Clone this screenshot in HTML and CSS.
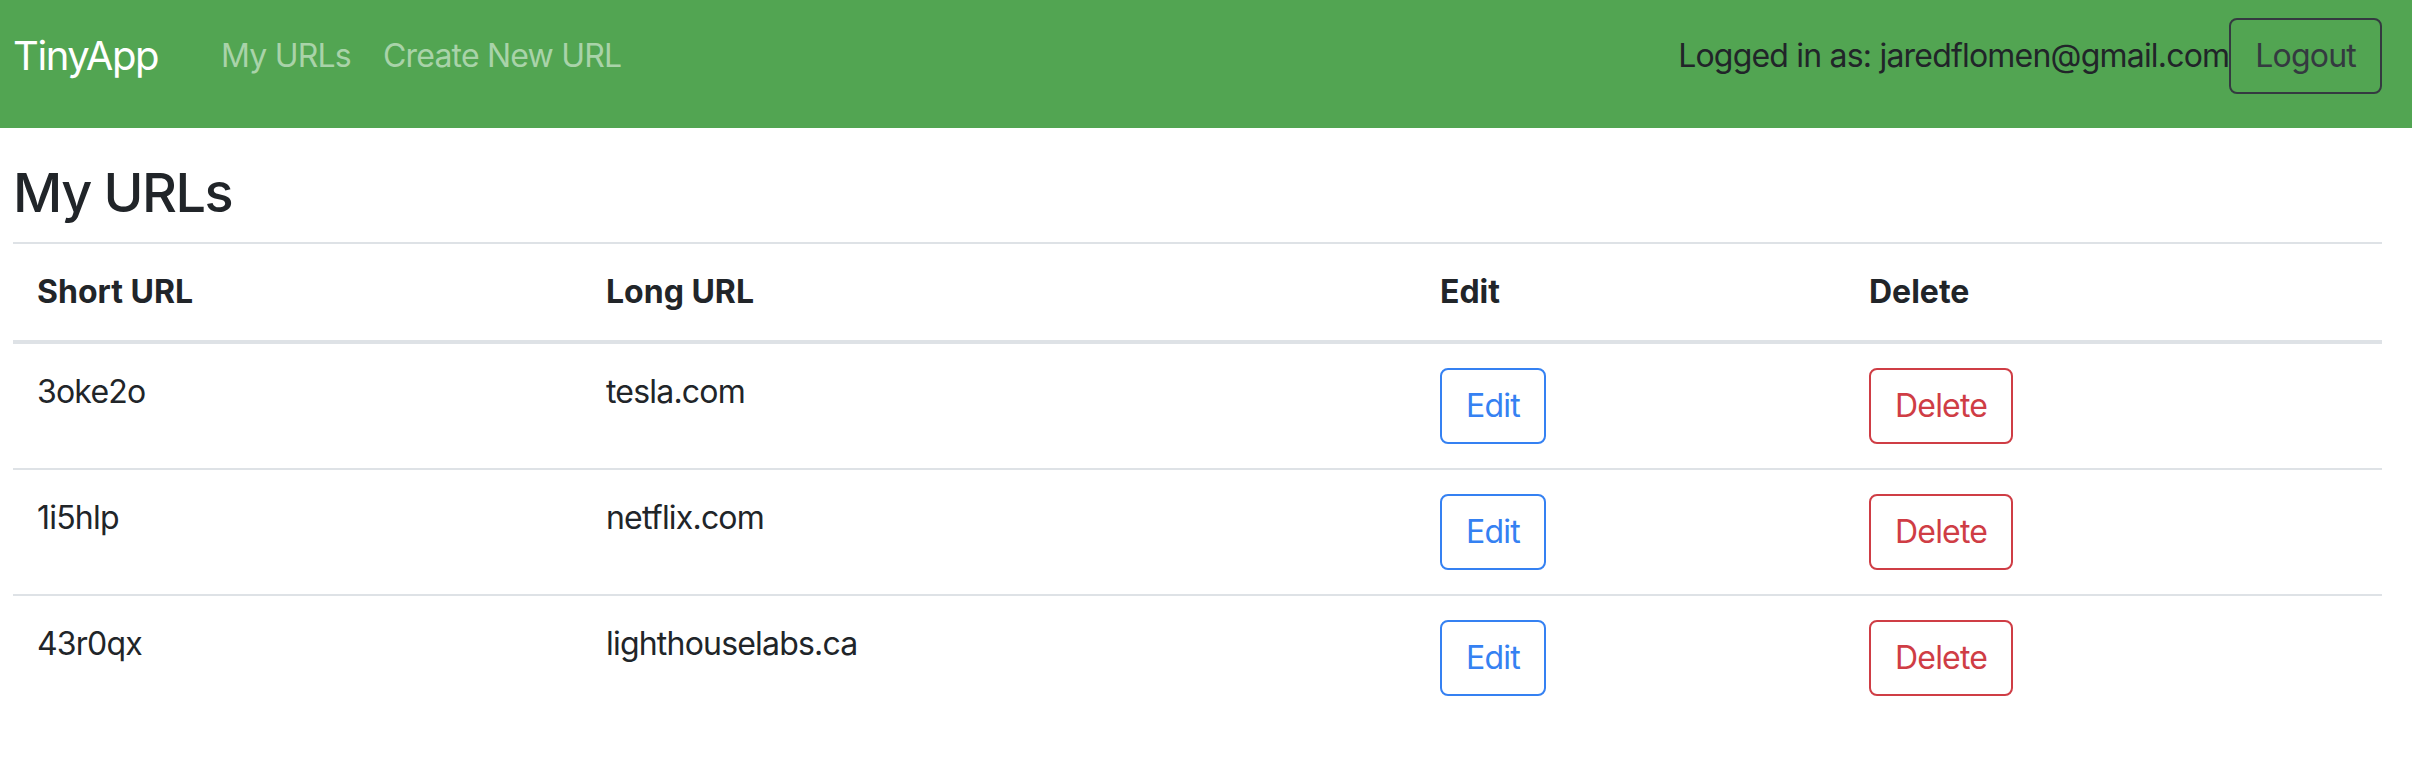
FILE: index.html
```html
<!DOCTYPE html>
<html lang="en">
<head>
<meta charset="utf-8">
<title>TinyApp</title>
<link rel="stylesheet" href="styles.css">
</head>
<body>
<nav class="navbar">
  <a class="brand" href="#">TinyApp</a>
  <ul class="nav-links">
    <li><a class="nav-link" href="#">My URLs</a></li>
    <li><a class="nav-link" href="#">Create New URL</a></li>
  </ul>
  <div class="user-area">
    <span class="user-text">Logged in as: jaredflomen@gmail.com</span>
    <button class="btn btn-dark-outline" type="button">Logout</button>
  </div>
</nav>
<main class="content">
  <h3 class="page-title">My URLs</h3>
  <table class="url-table">
    <thead>
      <tr>
        <th class="col-short">Short URL</th>
        <th class="col-long">Long URL</th>
        <th class="col-edit">Edit</th>
        <th class="col-delete">Delete</th>
      </tr>
    </thead>
    <tbody>
      <tr>
        <td>3oke2o</td>
        <td>tesla.com</td>
        <td><button class="btn btn-blue-outline" type="button">Edit</button></td>
        <td><button class="btn btn-red-outline" type="button">Delete</button></td>
      </tr>
      <tr>
        <td>1i5hlp</td>
        <td>netflix.com</td>
        <td><button class="btn btn-blue-outline" type="button">Edit</button></td>
        <td><button class="btn btn-red-outline" type="button">Delete</button></td>
      </tr>
      <tr>
        <td>43r0qx</td>
        <td>lighthouselabs.ca</td>
        <td><button class="btn btn-blue-outline" type="button">Edit</button></td>
        <td><button class="btn btn-red-outline" type="button">Delete</button></td>
      </tr>
    </tbody>
  </table>
</main>
</body>
</html>
```

FILE: styles.css
```css
* { box-sizing: border-box; }

html, body {
  margin: 0;
  padding: 0;
  background: #ffffff;
}

body {
  font-family: Inter, "Liberation Sans", sans-serif;
  font-size: 32px;
  line-height: 1.5;
  letter-spacing: -0.025em;
  color: #212529;
}

.navbar {
  display: flex;
  align-items: flex-start;
  height: 128px;
  padding: 16px 30px 0 13px;
  background: #52a552;
}

.brand {
  display: block;
  font-size: 40px;
  line-height: 60px;
  letter-spacing: -0.035em;
  padding: 10px 0;
  color: #ffffff;
  text-decoration: none;
  margin-right: 47px;
}

.nav-links {
  display: flex;
  list-style: none;
  margin: 0;
  padding: 0;
  height: 80px;
  align-items: center;
}

.nav-link {
  display: block;
  padding: 16px 16px;
  color: #a9d3a9;
  text-decoration: none;
}

.user-area {
  margin-left: auto;
  display: flex;
  align-items: center;
  height: 80px;
}

.user-text {
  color: #212529;
}

.btn {
  display: inline-block;
  font-family: inherit;
  font-size: 32px;
  line-height: 48px;
  letter-spacing: -0.025em;
  padding: 12px 24px;
  border: 2px solid transparent;
  border-radius: 8px;
  background: transparent;
  cursor: pointer;
}

.btn-dark-outline {
  color: #343a40;
  border-color: #343a40;
}

.btn-blue-outline {
  color: #3581f2;
  border-color: #3581f2;
}

.btn-red-outline {
  color: #cf3d45;
  border-color: #cf3d45;
}

.content {
  padding: 32px 30px 0 13px;
}

.page-title {
  margin: 0 0 16px 0;
  font-size: 54px;
  font-weight: 500;
  line-height: 1.22;
  letter-spacing: -0.028em;
}

.url-table {
  width: 100%;
  border-collapse: collapse;
  margin-bottom: 32px;
}

.url-table th,
.url-table td {
  padding: 24px;
  text-align: left;
  vertical-align: top;
  border-top: 2px solid #dee2e6;
}

.url-table th {
  font-weight: 700;
  letter-spacing: 0;
  vertical-align: bottom;
  border-bottom: 4px solid #dee2e6;
}

.col-short { width: 569px; }
.col-long { width: 834px; }
.col-edit { width: 429px; }
```
